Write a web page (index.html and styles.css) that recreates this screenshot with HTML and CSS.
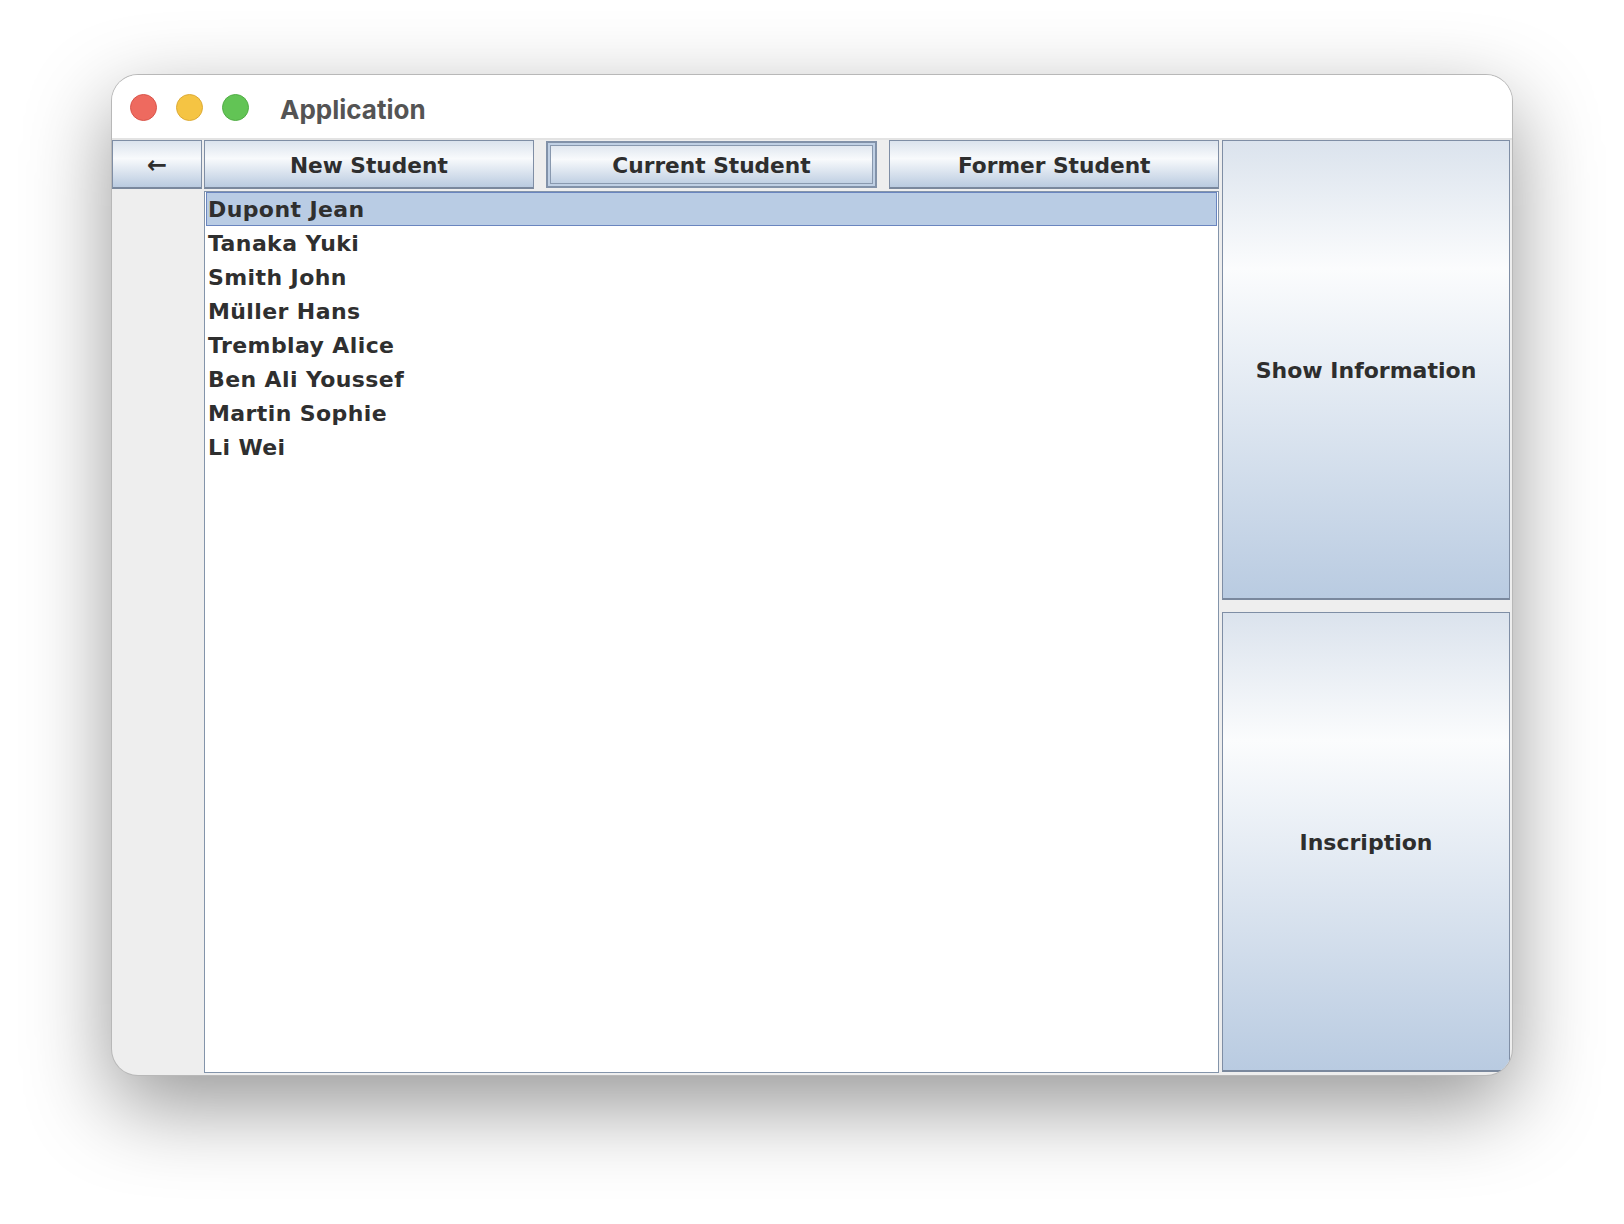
FILE: index.html
```html
<!DOCTYPE html>
<html lang="en">
  <head>
    <meta charset="UTF-8" />
    <meta name="viewport" content="width=device-width, initial-scale=1.0" />
    <title>Application</title>
    <link rel="stylesheet" href="styles.css">
  </head>
  <body>
    <div class="window">
      <div class="titlebar">
        <span class="light red"></span>
        <span class="light yellow"></span>
        <span class="light green"></span>
        <span class="title">Application</span>
      </div>
      <div class="main">
        <div class="side">
          <button class="btn back">&larr;</button>
        </div>
        <div class="center">
          <div class="tabs">
            <button class="btn tab">New Student</button>
            <button class="btn tab focused">Current Student</button>
            <button class="btn tab">Former Student</button>
          </div>
          <ul class="students">
            <li class="selected">Dupont Jean</li>
            <li>Tanaka Yuki</li>
            <li>Smith John</li>
            <li>Müller Hans</li>
            <li>Tremblay Alice</li>
            <li>Ben Ali Youssef</li>
            <li>Martin Sophie</li>
            <li>Li Wei</li>
          </ul>
        </div>
        <div class="actions">
          <button class="btn big">Show Information</button>
          <button class="btn big">Inscription</button>
        </div>
      </div>
    </div>
  </body>
</html>
```

FILE: styles.css
```css
html {
  background: #fff;
}
body {
  margin: 0;
  height: 1224px;
  box-sizing: border-box;
  padding: 75px 0 0 112px;
  background: #fff;
  font-family: "DejaVu Sans", Verdana, sans-serif;
}
.window {
  width: 1400px;
  height: 1000px;
  box-sizing: border-box;
  border-radius: 26px;
  overflow: hidden;
  background: #eeeeee;
  box-shadow: 0 0 0 1px #b8b8b8, 0 30px 85px rgba(0, 0, 0, 0.42);
}
.titlebar {
  height: 61px;
  padding-top: 2px;
  background: #fff;
  border-bottom: 2px solid #e3e3e3;
  display: flex;
  align-items: center;
  padding-left: 18px;
}
.light {
  width: 27px;
  height: 27px;
  border-radius: 50%;
  margin-right: 19px;
  box-sizing: border-box;
}
.red {
  background: #ee6a5f;
  border: 1px solid #d8544a;
}
.yellow {
  background: #f5c443;
  border: 1px solid #dcaa36;
}
.green {
  background: #62c455;
  border: 1px solid #51ad45;
}
.title {
  margin: 3px 0 0 12px;
  font-family: Inter, "Open Sans", sans-serif;
  font-weight: 700;
  font-size: 26px;
  color: #545454;
}
.main {
  display: flex;
  height: 935px;
}
.side {
  width: 90px;
  margin-right: 2px;
}
.center {
  width: 1015px;
  display: flex;
  flex-direction: column;
}
.actions {
  width: 288px;
  margin-left: 3px;
  display: flex;
  flex-direction: column;
  gap: 12px;
  padding-bottom: 3px;
}
.btn {
  font-family: "DejaVu Sans", Verdana, sans-serif;
  font-weight: bold;
  font-size: 22px;
  color: #2e2e2e;
  border: 1px solid #7f8ea5;
  border-bottom: 2px solid #7a889d;
  background: linear-gradient(#dbe3ed 0%, #f8fafc 38%, #bacbe0 100%);
  margin: 0;
  padding: 2px 0 0;
  box-sizing: border-box;
}
.back {
  width: 90px;
  height: 49px;
  font-size: 24px;
}
.tabs {
  display: flex;
  gap: 12px;
  height: 49px;
  margin-bottom: 2px;
}
.tab {
  flex: 1;
  height: 49px;
  font-size: 21.7px;
}
.tab.focused {
  height: 47px;
  margin-top: 1px;
  border: 2px solid #8292a9;
  box-shadow: inset 0 0 0 2px #c0d0e4, inset 0 0 0 3px #8898ae;
}
.big {
  flex: 1;
  background: linear-gradient(#dbe3ed 0%, #fbfcfd 28%, #b9cbe1 100%);
}
.students {
  list-style: none;
  margin: 0;
  padding: 0;
  height: 882px;
  box-sizing: border-box;
  border: 1px solid #8394aa;
  background: #fff;
}
.students li {
  height: 34px;
  line-height: 32px;
  padding-top: 1px;
  box-sizing: border-box;
  border: 1px solid transparent;
  margin: 0 1px;
  padding-left: 1px;
  font-size: 22px;
  font-weight: bold;
  letter-spacing: 0.4px;
  color: #2f2f2f;
}
.students li.selected {
  background: #b9cce4;
  border-color: #6a85bf;
}
```
